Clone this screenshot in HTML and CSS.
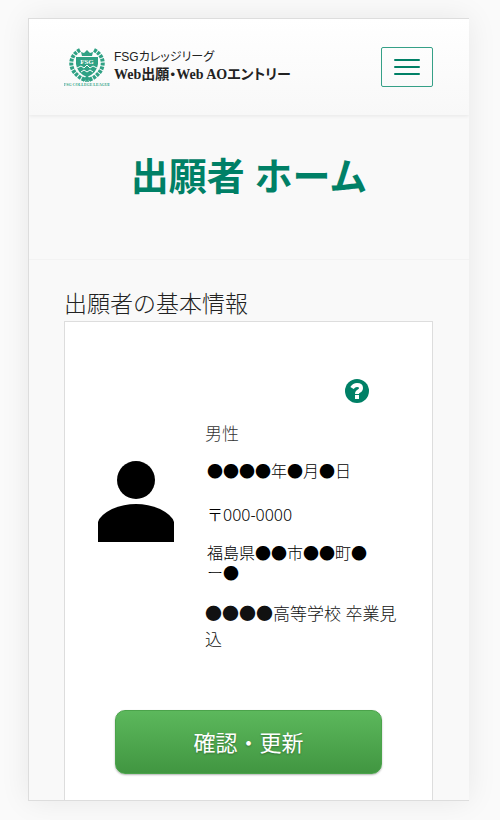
FILE: index.html
```html
<!DOCTYPE html>
<html lang="ja">
<head>
  <meta charset="UTF-8">
  <meta name="viewport" content="width=device-width, initial-scale=1">
  <title>出願者 ホーム</title>
  <link rel="stylesheet" href="styles.css">
</head>
<body>
  <div class="page">
    <header class="header">
      <a class="logo" href="#">
        <svg class="logo-mark" viewBox="0 0 46 38" aria-hidden="true">
          <g fill="none" stroke="#2fa184" stroke-width="4" stroke-dasharray="3 1">
            <path d="M16 2C6 7 4 19 13 27q4 4 10 5"/>
            <path d="M30 2c10 5 12 17 3 25q-4 4-10 5"/>
          </g>
          <path fill="#2fa184" d="M17 4l3 1 3-3 3 3 3-1-1 4H18zM12 9h22v7q-1 9-11 13-10-4-11-13z"/>
          <path fill="none" stroke="#2fa184" stroke-width="2" d="M19 33l4-4 4 4"/>
          <path fill="none" stroke="#fff" stroke-width="1" d="M13 20l4-2 3 2 3-3 3 3 3-2 4 2M17 24l3-2 3 2 3-2 3 2"/>
          <text class="mark-name" x="23" y="16" text-anchor="middle">FSG</text>
          <text class="mark-caption" x="23" y="38" text-anchor="middle">FSG COLLEGE LEAGUE</text>
        </svg>
        <span class="logo-text">
          <span class="logo-sub">FSGカレッジリーグ</span>
          <span class="logo-main">Web出願・Web AOエントリー</span>
        </span>
      </a>
      <button class="menu-button" type="button" aria-label="メニュー">
        <span class="bar"></span>
        <span class="bar"></span>
        <span class="bar"></span>
      </button>
    </header>

    <div class="page-title">
      <h1>出願者 ホーム</h1>
    </div>

    <main class="content">
      <h2>出願者の基本情報</h2>
      <div class="card">
        <a class="help" href="#" aria-label="ヘルプ">
          <svg viewBox="0 0 24 24" aria-hidden="true">
            <circle cx="12" cy="12" r="12" fill="#008066"/>
            <path fill="none" stroke="#fff" stroke-width="4" d="M7 9q2-3 5-3 4 0 4 3 0 2-2 3t-2 3"/>
            <path fill="#fff" d="M10 16h4v4h-4z"/>
          </svg>
        </a>
        <div class="profile">
          <svg class="avatar" viewBox="0 0 76 81" aria-hidden="true">
            <circle cx="38" cy="19" r="19"/>
            <path d="M0 81V61Q2 54 14 48 26 43 38 43t24 5q12 6 14 13v20z"/>
          </svg>
          <div class="info">
            <p class="gender">男性</p>
            <p class="birthday">●●●●年●月●日</p>
            <p class="postcode">〒000-0000</p>
            <p class="address">福島県●●市●●町●<br>ー●</p>
            <p class="school">●●●●高等学校 卒業見込</p>
          </div>
        </div>
        <button class="update-button" type="button">確認・更新</button>
      </div>
    </main>
  </div>
</body>
</html>
```

FILE: styles.css
```css
* {
  box-sizing: border-box;
}

body {
  margin: 0;
  padding: 18px 31px 19px 28px;
  background-color: #fafafa;
  color: #000;
  font-family: "Noto Sans", "Noto Sans CJK JP", sans-serif;
  font-size: 16px;
}

h1, h2, p {
  margin: 0;
}

.page {
  display: flex;
  flex-direction: column;
  height: calc(100vh - 37px);
  overflow: hidden;
  background-color: #f9f9f9;
  border: 1px solid #ddd;
  border-right: none;
  box-shadow: 0 0 28px rgba(0,0,0,0.08);
}

.header {
  display: flex;
  flex-shrink: 0;
  justify-content: space-between;
  align-items: center;
  height: 96px;
  padding: 0 36px 0 35px;
  background: linear-gradient(#fff, #f8f8f8);
  box-shadow: 0 1px 4px rgba(0,0,0,0.08);
}

.logo {
  display: flex;
  align-items: center;
  gap: 4px;
  color: #222;
  text-decoration: none;
  white-space: nowrap;
}

.logo-mark {
  width: 46px;
  height: 38px;
}

.mark-name {
  font: bold 7px "Liberation Serif", serif;
  fill: #fff;
}

.mark-caption {
  font: bold 4px "Liberation Serif", serif;
  fill: #2fa184;
}

.logo-text {
  display: flex;
  flex-direction: column;
  font-feature-settings: "palt";
}

.logo-sub {
  font-family: "Liberation Sans", "Noto Sans CJK JP", sans-serif;
  font-size: 12px;
  line-height: 16px;
}

.logo-main {
  font-family: "Liberation Serif", "Noto Sans CJK JP", serif;
  font-size: 14px;
  font-weight: bold;
  line-height: 20px;
}

.menu-button {
  display: flex;
  flex-direction: column;
  align-items: center;
  justify-content: center;
  gap: 5px;
  width: 52px;
  height: 40px;
  padding: 0;
  background: transparent;
  border: 1px solid #35a087;
  border-radius: 2px;
  cursor: pointer;
}

.bar {
  width: 26px;
  height: 2px;
  background-color: #008066;
  border-radius: 1px;
}

.page-title {
  flex-shrink: 0;
  height: 145px;
  padding-top: 32px;
  border-bottom: 1px solid #f3f3f3;
  text-align: center;
}

h1 {
  color: #008066;
  font-size: 38px;
  line-height: 56px;
}

.content {
  display: flex;
  flex: 1;
  flex-direction: column;
  padding: 26px 36px 0 35px;
}

h2 {
  color: #222;
  font-size: 23px;
  font-weight: 300;
  line-height: 35px;
}

.card {
  display: flex;
  flex: 1;
  flex-direction: column;
  padding: 57px 33px 0;
  background-color: #fff;
  border: 1px solid #ddd;
  border-bottom: none;
}

.help {
  align-self: flex-end;
  width: 24px;
  height: 24px;
  margin-right: 30px;
}

.help svg {
  display: block;
}

.profile {
  display: grid;
  grid-template-columns: 76px 1fr;
  gap: 31px;
  margin-top: 18px;
}

.avatar {
  width: 76px;
  height: 81px;
  margin-top: 40px;
}

.info {
  font-weight: 300;
  line-height: 20px;
}

.gender,
.school {
  font-size: 17px;
  line-height: 26px;
}

.gender {
  color: #333;
}

.school {
  margin: 18px -8px 0 0;
  color: #111;
}

.birthday,
.postcode,
.address {
  padding-left: 2px;
}

.birthday {
  margin-top: 14px;
}

.postcode {
  margin-top: 24px;
}

.address {
  margin-top: 18px;
}

.update-button {
  height: 64px;
  margin: 57px 17px 0;
  padding-bottom: 4px;
  background: linear-gradient(#5cb85c, #419641);
  border: 1px solid #4ba34b;
  border-radius: 10px;
  box-shadow: 0 1px 2px rgba(0,0,0,0.3);
  color: #fff;
  font-family: inherit;
  font-size: 22px;
  text-shadow: 0 1px 2px rgba(0,0,0,0.3);
  cursor: pointer;
}
```
